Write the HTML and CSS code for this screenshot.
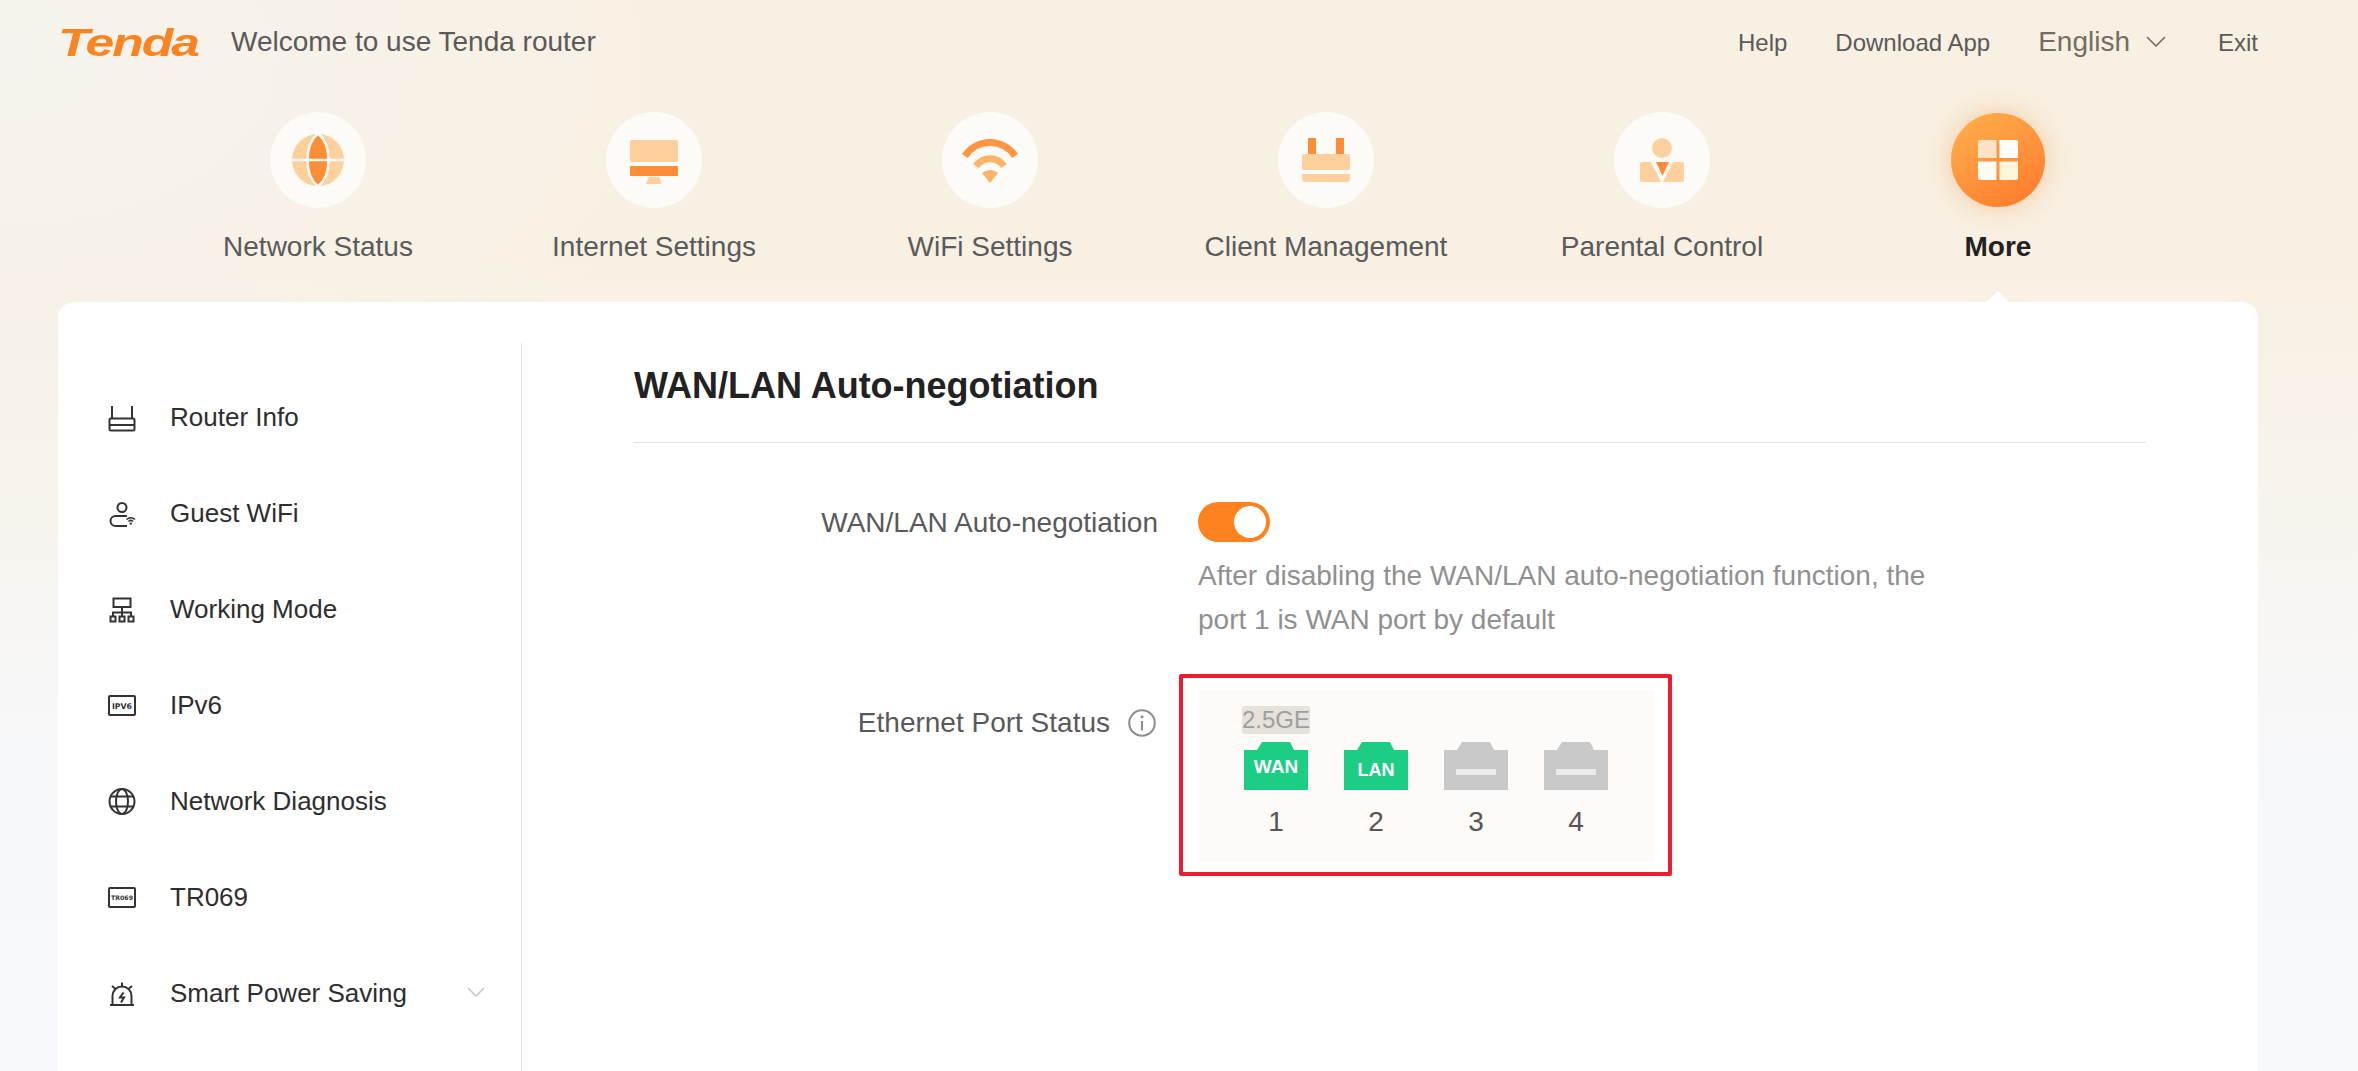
FILE: index.html
```html
<!DOCTYPE html>
<html lang="en">
<head>
<meta charset="utf-8">
<title>Tenda router</title>
<link rel="stylesheet" href="styles.css">
</head>
<body>
<div class="page">
  <header class="topbar">
    <div class="brand">
      <span class="logo">Tenda</span>
      <span class="welcome">Welcome to use Tenda router</span>
    </div>
    <div class="toplinks">
      <a class="toplink">Help</a>
      <a class="toplink">Download App</a>
      <a class="lang">English
        <svg class="lang-chev" viewBox="0 0 20 11"><path d="M1 1l9 9 9-9"/></svg>
      </a>
      <a class="toplink">Exit</a>
    </div>
  </header>

  <nav class="mainnav">
    <div class="navitem">
      <svg class="navicon" viewBox="0 0 96 96"><circle class="disc" cx="48" cy="48" r="48"/><circle class="lt" cx="48" cy="48" r="26"/><path class="cut" d="M22 48h52"/><path class="dk cut" d="M48 21.500C62 33 62 63 48 74.500C34 63 34 33 48 21.500Z"/><path class="cut" d="M36 48h24"/></svg>
      <span>Network Status</span>
    </div>
    <div class="navitem">
      <svg class="navicon" viewBox="0 0 96 96"><circle class="disc" cx="48" cy="48" r="48"/><rect class="lt" x="24" y="28" width="48" height="22" rx="2"/><rect class="dk" x="24" y="54" width="48" height="10" rx="1"/><path class="lt" d="M43 65h10l3 7H40z"/></svg>
      <span>Internet Settings</span>
    </div>
    <div class="navitem">
      <svg class="navicon" viewBox="0 0 96 96"><circle class="disc" cx="48" cy="48" r="48"/><path class="arc-out" d="M23 44A30 30 0 0 1 73 44"/><path class="arc-mid" d="M34 54A17 17 0 0 1 62 54"/><path class="mid" d="M48 71L40 61Q48 55 56 61Z"/></svg>
      <span>WiFi Settings</span>
    </div>
    <div class="navitem">
      <svg class="navicon" viewBox="0 0 96 96"><circle class="disc" cx="48" cy="48" r="48"/><rect class="dk" x="30" y="26" width="8" height="16"/><rect class="dk" x="58" y="26" width="8" height="16"/><rect class="lt" x="24" y="42" width="48" height="16" rx="2"/><path class="lt" d="M24 62h48v5a3 3 0 0 1-3 3H27a3 3 0 0 1-3-3z"/></svg>
      <span>Client Management</span>
    </div>
    <div class="navitem">
      <svg class="navicon" viewBox="0 0 96 96"><circle class="disc" cx="48" cy="48" r="48"/><circle class="lt" cx="48" cy="36" r="10"/><path class="lt" d="M28 50h9l10 20H28a2 2 0 0 1-2-2V52a2 2 0 0 1 2-2z"/><path class="lt" d="M68 50h-9L49 70h19a2 2 0 0 0 2-2V52a2 2 0 0 0-2-2z"/><path class="dk" d="M42 50h13l-6.500 14z"/></svg>
      <span>Parental Control</span>
    </div>
    <div class="navitem navitem-active">
      <svg class="navicon" viewBox="0 0 96 96"><defs><linearGradient id="moreg" x1="0.2" y1="0.05" x2="0.8" y2="0.95"><stop offset="0" stop-color="#ffab4a"/><stop offset="1" stop-color="#ff7e2e"/></linearGradient></defs><circle fill="url(#moreg)" cx="48" cy="48" r="47"/><path fill="#fde3c6" d="M30 28h16.500v18H28V30a2 2 0 0 1 2-2z"/><path fill="#fffdf9" d="M49.500 28H66a2 2 0 0 1 2 2v16H49.500z"/><path fill="#fffdf2" d="M28 49.500h18.500V68H30a2 2 0 0 1-2-2z"/><path fill="#fff6dc" d="M49.500 49.500H68V66a2 2 0 0 1-2 2H49.500z"/></svg>
      <span>More</span>
    </div>
  </nav>

  <main class="card">
    <aside class="sidebar">
      <div class="menuitem">
        <svg class="menuicon" viewBox="0 0 32 32"><path d="M6 6v13M26 6v13"/><rect x="3.500" y="18.500" width="25" height="12" rx="1.500"/><path d="M3.500 25h25"/></svg>
        <span>Router Info</span>
      </div>
      <div class="menuitem">
        <svg class="menuicon" viewBox="0 0 32 32"><circle cx="16" cy="11.500" r="4.500"/><path d="M21 20H9.500a5 5 0 0 0 0 10H21"/><path class="thin" d="M20.500 23.500a6 6 0 0 1 8.500 0M22.500 25.500a3.200 3.200 0 0 1 4.500 0"/><circle class="solid" cx="24.800" cy="27.600" r="1.200"/></svg>
        <span>Guest WiFi</span>
      </div>
      <div class="menuitem">
        <svg class="menuicon" viewBox="0 0 32 32"><rect x="7.500" y="6.500" width="17" height="8.500"/><path d="M16 15v9M7 24v-3.500h18V24"/><rect x="4.500" y="24.500" width="5" height="5"/><rect x="13.500" y="24.500" width="5" height="5"/><rect x="22.500" y="24.500" width="5" height="5"/></svg>
        <span>Working Mode</span>
      </div>
      <div class="menuitem">
        <svg class="menuicon" viewBox="0 0 32 32"><rect x="3" y="8" width="26" height="19" rx="1"/><text class="icontext" x="16" y="20.500" font-size="7.800">IPV6</text></svg>
        <span>IPv6</span>
      </div>
      <div class="menuitem">
        <svg class="menuicon" viewBox="0 0 32 32"><circle cx="16" cy="17.500" r="12.500"/><ellipse cx="16" cy="17.500" rx="6" ry="12.500"/><path d="M5 12.500h22M5 22.500h22"/></svg>
        <span>Network Diagnosis</span>
      </div>
      <div class="menuitem">
        <svg class="menuicon" viewBox="0 0 32 32"><rect x="3" y="8" width="26" height="19" rx="1"/><text class="icontext" x="16" y="20" font-size="6.200">TR069</text></svg>
        <span>TR069</span>
      </div>
      <div class="menuitem">
        <svg class="menuicon" viewBox="0 0 32 32"><path d="M6.500 28.500V20a9.500 9.500 0 0 1 19 0v8.500M4 29h24"/><path class="thin-b" d="M16 6.500v3.500M6 10l3 2.500M26 10l-3 2.500"/><path class="thin-b" d="M17.500 16.500l-3.500 5h4l-3 5"/></svg>
        <span>Smart Power Saving</span>
        <svg class="menuchev" viewBox="0 0 18 10"><path d="M1 1l8 8 8-8"/></svg>
      </div>
    </aside>

    <section class="content">
      <h1 class="title">WAN/LAN Auto-negotiation</h1>
      <div class="form">
        <div class="row row-toggle">
          <label class="label label-auto">WAN/LAN Auto-negotiation</label>
          <div class="value">
            <div class="toggle"><span class="knob"></span></div>
            <p class="help">After disabling the WAN/LAN auto-negotiation function, the<br>port 1 is WAN port by default</p>
          </div>
        </div>
        <div class="row row-ports">
          <label class="label label-ports">Ethernet Port Status
            <svg class="info" viewBox="0 0 28 28"><circle cx="14" cy="14" r="12.800"/><path d="M14 12v9.500"/><circle class="info-dot" cx="14" cy="7.800" r="1.500"/></svg>
          </label>
          <div class="value">
            <div class="portbox">
              <span class="annot"></span>
              <div class="port">
                <span class="speed">2.5GE</span>
                <svg class="porticon" viewBox="0 0 64 48"><path class="port-on" d="M0 8h13l5-8h28l4 8h14v40H0z"/><text class="port-text" x="32" y="31" font-size="19">WAN</text></svg>
                <span class="portnum">1</span>
              </div>
              <div class="port">
                <svg class="porticon" viewBox="0 0 64 48"><path class="port-on" d="M0 8h13l5-8h28l4 8h14v40H0z"/><text class="port-text" x="32" y="34" font-size="18">LAN</text></svg>
                <span class="portnum">2</span>
              </div>
              <div class="port">
                <svg class="porticon" viewBox="0 0 64 48"><path class="port-off" d="M0 8h13l5-8h28l4 8h14v40H0z"/><rect class="port-dash" x="12" y="27" width="40" height="6"/></svg>
                <span class="portnum">3</span>
              </div>
              <div class="port">
                <svg class="porticon" viewBox="0 0 64 48"><path class="port-off" d="M0 8h13l5-8h28l4 8h14v40H0z"/><rect class="port-dash" x="12" y="27" width="40" height="6"/></svg>
                <span class="portnum">4</span>
              </div>
            </div>
          </div>
        </div>
      </div>
    </section>
  </main>
</div>
</body>
</html>
```

FILE: styles.css
```css
* { box-sizing: border-box; }
html, body { margin: 0; height: 100%; }
body {
  font-family: "Liberation Sans", Arial, sans-serif;
  overflow: hidden;
  background:
    radial-gradient(ellipse 700px 420px at 0 60px, #f6f3ee 0%, rgba(246,243,238,0) 100%),
    linear-gradient(180deg, #f8f0e2 0, #f8f0e2 260px, #f7f8fa 760px, #f7f9fc 100%);
}
.page { height: 1071px; overflow: hidden; padding: 0 100px 0 58px; }

/* top bar */
.topbar { display: flex; justify-content: space-between; align-items: center; height: 84px; }
.brand { display: flex; align-items: center; }
.logo {
  display: inline-block;
  width: 143px;
  font-size: 38px;
  line-height: 44px;
  font-weight: 700;
  font-style: italic;
  color: #fa8421;
  letter-spacing: -1.500px;
  transform: scaleX(1.36);
  transform-origin: left center;
  padding-top: 2px;
}
.welcome { margin-left: 30px; font-size: 28px; color: #5a5a5a; }
.toplinks { display: flex; align-items: center; }
.toplink { font-size: 24px; color: #5a5a5a; margin-left: 48px; padding-top: 2px; }
.lang { display: flex; align-items: center; margin-left: 48px; font-size: 28px; color: #756d62; margin-top: -1px; }
.lang-chev { width: 20px; height: 11px; margin-left: 16px; fill: none; stroke: #756d62; stroke-width: 1.600; }
.toplinks .lang + .toplink { margin-left: 52px; }

/* main nav */
.mainnav { display: flex; justify-content: center; margin: 28px -100px 0 -58px; padding-right: 42px; height: 190px; }
.navitem { width: 336px; display: flex; flex-direction: column; align-items: center; font-size: 28px; color: #5a5a5a; }
.navitem span { margin-top: 23px; line-height: 32px; }
.navicon { width: 96px; height: 96px; display: block; overflow: visible; }
.navitem-active { color: #222; font-weight: 700; position: relative; }
.navitem-active .navicon { filter: drop-shadow(0 0 14px rgba(240, 170, 100, .55)); }
.navitem-active::after {
  content: "";
  position: absolute;
  left: 50%;
  top: 179px;
  margin-left: -12px;
  border-left: 12px solid transparent;
  border-right: 12px solid transparent;
  border-bottom: 12px solid #fff;
}
.disc { fill: #fdfbf8; }
.lt { fill: #fed09e; }
.dk { fill: #ff8d38; }
.mid { fill: #ffb368; }
.cut { stroke: #fdfbf8; stroke-width: 2.500; fill: none; }
.dk.cut { fill: #ff8d38; }
.arc-out { fill: none; stroke: #ff9543; stroke-width: 7; }
.arc-mid { fill: none; stroke: #ffb368; stroke-width: 7; }

/* card */
.card { display: flex; background: #fff; border-radius: 16px; width: 2200px; height: 900px; }
.sidebar {
  width: 464px;
  margin-top: 41px;
  padding-top: 25px;
  border-right: 1px solid #e4e4e4;
}
.menuitem { display: flex; align-items: center; height: 96px; padding-left: 48px; font-size: 26px; color: #2e2e2e; position: relative; }
.menuitem span { margin-left: 32px; padding-top: 2px; }
.menuicon { width: 32px; height: 32px; flex: none; fill: none; stroke: #333; stroke-width: 2; }
.menuicon .thin { stroke-width: 1.500; }
.menuicon .thin-b { stroke-width: 2; }
.menuicon .solid { fill: #333; stroke: none; }
.icontext { font-family: "DejaVu Sans", sans-serif; font-weight: 700; fill: #333; stroke: none; text-anchor: middle; }
.menuchev { width: 18px; height: 10px; margin-left: auto; margin-right: 36px; fill: none; stroke: #c8c8c8; stroke-width: 1.600; }

.content { flex: 1; padding: 62px 112px 0 111px; }
.title { margin: 0; padding: 0 0 34px 1px; font-size: 36px; line-height: 44px; font-weight: 700; color: #222; border-bottom: 1px solid #e0e0e0; }
.form { display: flex; flex-direction: column; }
.row { display: flex; }
.row-toggle { margin-top: 59px; }
.row-ports { margin-top: 48px; }
.label { width: 525px; height: 40px; margin-right: 40px; flex: none; text-align: right; font-size: 28px; line-height: 40px; color: #595959; }
.label-auto { padding-top: 1px; }
.label-ports { margin-top: 13px; display: flex; justify-content: flex-end; align-items: center; padding-right: 2px; }
.info { width: 28px; height: 28px; margin-left: 18px; fill: none; stroke: #8c8c8c; stroke-width: 2; }
.info-dot { fill: #8c8c8c; stroke: none; }
.value { flex: none; }
.toggle { width: 72px; height: 40px; border-radius: 20px; background: #ff8221; display: flex; align-items: center; justify-content: flex-end; padding-right: 4px; }
.knob { width: 32px; height: 32px; border-radius: 50%; background: #fff; }
.help { margin: 12px 0 0; font-size: 28px; line-height: 44px; color: #909090; }

/* ports */
.portbox { position: relative; display: flex; align-items: stretch; width: 456px; height: 172px; padding: 16px 28px 24px; background: #fdfaf7; }
.annot { position: absolute; inset: -16px -18px -14px -19px; border: 4px solid #ee1c2e; border-radius: 2px; }
.port { width: 100px; display: flex; flex-direction: column; align-items: center; justify-content: flex-end; }
.speed { font-size: 24px; line-height: 28px; color: #a09e9c; background: #e5e1dd; border-radius: 2px; margin-bottom: 8px; }
.porticon { width: 64px; height: 48px; display: block; }
.portnum { margin-top: 14px; font-size: 28px; line-height: 32px; color: #555; padding-top: 2px; height: 34px; }
.port-on { fill: #1bce84; }
.port-off { fill: #c8c8c8; }
.port-dash { fill: #ebebeb; }
.port-text { font-family: "Liberation Sans", sans-serif; font-weight: 700; fill: #fff; text-anchor: middle; }
```
